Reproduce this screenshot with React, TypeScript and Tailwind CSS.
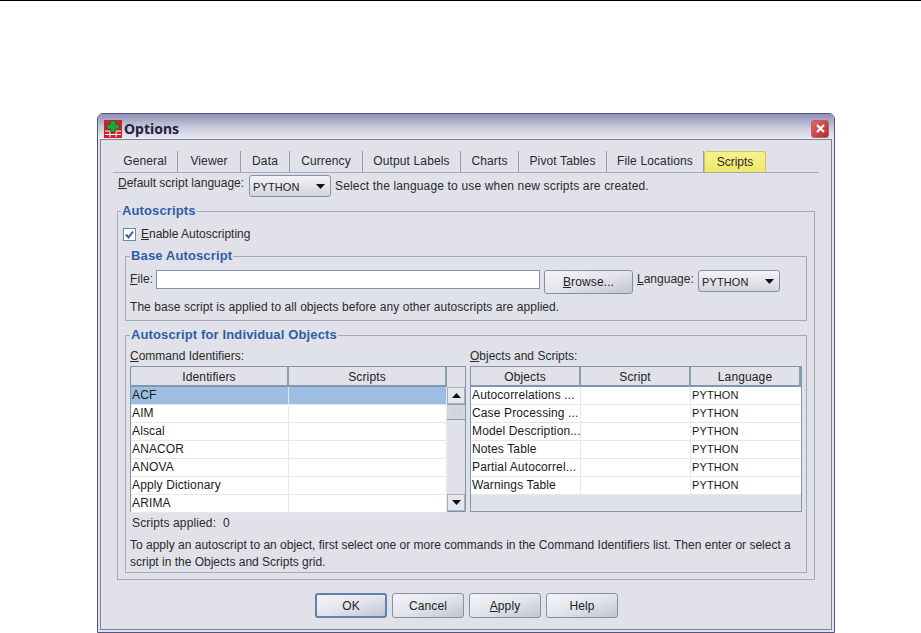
const tabs = [
  { label: "General", w: "w-[65px]" },
  { label: "Viewer", w: "w-[63px]" },
  { label: "Data", w: "w-[49px]" },
  { label: "Currency", w: "w-[73px]" },
  { label: "Output Labels", w: "w-[98px]" },
  { label: "Charts", w: "w-[58px]" },
  { label: "Pivot Tables", w: "w-[88px]" },
  { label: "File Locations", w: "w-[97px]" },
];

const identifiers = ["ACF", "AIM", "Alscal", "ANACOR", "ANOVA", "Apply Dictionary", "ARIMA"];
const objects = [
  "Autocorrelations ...",
  "Case Processing ...",
  "Model Description...",
  "Notes Table",
  "Partial Autocorrel...",
  "Warnings Table",
];

function Arrow({ up }: { up?: boolean }) {
  return (
    <svg width="9" height="5" viewBox="0 0 9 5" className="shrink-0">
      <path d={up ? "M4.5 0L9 5H0Z" : "M0 0H9L4.5 5Z"} fill="#111" />
    </svg>
  );
}

function Select({ className }: { className?: string }) {
  return (
    <div
      className={`flex w-[82px] items-center justify-between rounded-[3px] border border-[#8193ad] bg-gradient-to-b from-[#f3f3f8] to-[#d4d4de] pl-[3px] pr-[5px] text-[#222] ${className}`}
    >
      <span className="mt-px text-[11px]">PYTHON</span>
      <Arrow />
    </div>
  );
}

function Btn({ children, w, primary }: { children: React.ReactNode; w: string; primary?: boolean }) {
  return (
    <div
      className={`flex items-center justify-center rounded-[3px] border bg-gradient-to-br from-[#f4f4f8] via-[#e4e4ec] to-[#c4c4d0] text-[#222] ${w} ${
        primary ? "border-[#5b83ae] border-2" : "border-[#7f93a8]"
      }`}
    >
      {children}
    </div>
  );
}

function HeadCell({ label, className }: { label: string; className?: string }) {
  return (
    <div
      className={`flex h-5 items-center justify-center border-b-2 border-r-2 border-b-[#7f96ad] border-r-[#8c9db0] bg-[#e1e1ea] pt-px text-[#222] ${className}`}
    >
      {label}
    </div>
  );
}

function Cell({ children, selected, last }: { children?: React.ReactNode; selected?: boolean; last?: boolean }) {
  return (
    <div
      className={`flex h-[18px] items-center overflow-hidden whitespace-nowrap border-b border-r border-[#e6e6ee] pb-px pl-px text-[#1a1a1a] ${
        selected ? "bg-[#9dbde3]" : "bg-white"
      } ${last ? "border-r-0 text-[11px]" : ""}`}
    >
      {children}
    </div>
  );
}

function GroupTitle({ children, className }: { children: React.ReactNode; className?: string }) {
  return <legend className={`px-px text-[13px] font-bold leading-[14px] text-[#2f5da5] ${className}`}>{children}</legend>;
}

export default function App() {
  return (
    <div className="h-[633px] w-[921px] overflow-hidden bg-white font-['Liberation_Sans',Arial,sans-serif] text-[12px] leading-[14px] tracking-[0.13px] text-[#2a2a2a]">
      <div className="h-px w-full bg-black" />
      <div className="ml-[97px] mt-[112px] flex h-[520px] w-[738px] flex-col rounded-t-[6px] border border-[#54547e] bg-[#e1e1ea]">
        {/* title bar */}
        <div className="flex h-[25px] shrink-0 items-center rounded-t-[5px] bg-gradient-to-b from-[#8f8fb4] via-[#c6c6da] to-[#ebebf3] pl-[6px] pr-[5px] pt-[4px]">
          <svg width="18" height="18" viewBox="0 0 18 18" className="shrink-0">
            <rect width="18" height="18" fill="#c8232c" />
            <path d="M1 11H17M1 14.5H17M6 11V17M12 11V17" stroke="#fff" strokeWidth="1" />
            <path d="M6.5 1H11.5V4.5H15V9H11.5V12H6.5V9H3V4.5H6.5Z" fill="#1ea83c" stroke="#0c5a1e" strokeWidth="0.6" />
          </svg>
          <span className="ml-[2px] font-['Noto_Sans',sans-serif] text-[14px] font-bold tracking-normal text-[#23233c]">Options</span>
          <div className="ml-auto flex h-[18px] w-[18px] items-center justify-center rounded-[3px] border border-[#a8686c] bg-gradient-to-br from-[#e2676a] to-[#b3262f]">
            <svg width="9" height="9" viewBox="0 0 9 9">
              <path d="M1 1L8 8M8 1L1 8" stroke="#fff" strokeWidth="2.2" />
            </svg>
          </div>
        </div>

        {/* body */}
        <div className="mx-[2px] mb-[2px] flex min-h-0 flex-1 flex-col border border-[#80809f] pl-[12px] pr-[12px] pt-[11px]">
          {/* tabs */}
          <div className="flex h-[22px] shrink-0 border-b border-[#a9a9b5]">
            {tabs.map((t) => (
              <div key={t.label} className={`flex items-center justify-center border-r border-[#9b9ba8] pb-px ${t.w}`}>
                {t.label}
              </div>
            ))}
            <div className="flex w-[62px] items-center justify-center rounded-t-[3px] border border-b-0 border-[#c8c86a] bg-gradient-to-b from-[#f6f28e] to-[#efe86c] pb-px tracking-normal">
              Scripts
            </div>
          </div>

          {/* default language */}
          <div className="mt-[2px] flex h-[22px] shrink-0 items-center pl-[5px]">
            <span className="-mt-[6px] w-[131px] tracking-normal">
              <u>D</u>efault script language:
            </span>
            <Select className="h-[22px]" />
            <span className="ml-1 pb-px tracking-[0.16px]">Select the language to use when new scripts are created.</span>
          </div>

          {/* autoscripts */}
          <fieldset className="ml-[4px] mr-[4px] mt-[7px] h-[376px] shrink-0 border border-[#a9a9b5] pl-[7px] pr-[7px]">
            <GroupTitle className="-ml-[4px]">Autoscripts</GroupTitle>
            <div className="mt-[9px] flex h-[14px] items-center">
              <div className="-ml-[2px] flex h-[13px] w-[13px] items-center justify-center border border-[#6f86a8] bg-white">
                <svg width="11" height="11" viewBox="0 0 11 11">
                  <path d="M2 5.5L4.5 8.5L9 2.5" fill="none" stroke="#2a5fb0" strokeWidth="2" />
                </svg>
              </div>
              <span className="ml-[5px] tracking-normal">
                <u>E</u>nable Autoscripting
              </span>
            </div>

            {/* base autoscript */}
            <fieldset className="mt-[8px] h-[72px] border border-[#a9a9b5] pl-[4px] pr-[4px]">
              <GroupTitle>Base Autoscript</GroupTitle>
              <div className="mt-[7px] flex h-[23px] items-start">
                <span className="w-[26px] pt-[2px]">
                  <u>F</u>ile:
                </span>
                <div className="h-[19px] w-[384px] border border-[#8193ad] bg-white" />
                <Btn w="ml-[4px] h-[24px] w-[89px]">
                  <span>
                    <u>B</u>rowse...
                  </span>
                </Btn>
                <span className="ml-[4px] w-[61px] pt-[2px] tracking-normal">
                  <u>L</u>anguage:
                </span>
                <Select className="h-[22px]" />
              </div>
              <div className="mt-[7px] tracking-[0.06px]">The base script is applied to all objects before any other autoscripts are applied.</div>
            </fieldset>

            {/* individual objects */}
            <fieldset className="mt-[7px] h-[245px] border border-[#a9a9b5] pl-[4px] pr-[4px]">
              <GroupTitle>Autoscript for Individual Objects</GroupTitle>
              <div className="mt-[7px] flex gap-[4px]">
                <div className="w-[336px]">
                  <div className="h-[17px] tracking-normal">
                    <u>C</u>ommand Identifiers:
                  </div>
                  <div className="flex h-[146px] border border-[#7f96ad] bg-[#e1e1ea]">
                    <div className="grid w-[316px] grid-cols-[158px_158px] content-start">
                      <HeadCell label="Identifiers" />
                      <HeadCell label="Scripts" />
                      {identifiers.map((id, i) => (
                        <div key={id} className="contents">
                          <Cell selected={i === 0}>{id}</Cell>
                          <Cell selected={i === 0} />
                        </div>
                      ))}
                    </div>
                    {/* scrollbar */}
                    <div className="flex w-[18px] flex-col">
                      <div className="h-5" />
                      <div className="flex h-[17px] items-center justify-center border border-[#a9b3c0] bg-[#e6e6ee]">
                        <Arrow up />
                      </div>
                      <div className="flex h-[16px] items-center justify-center border-y border-[#8c9db0] bg-[#d3d9e0]">
                        <svg width="12" height="10" viewBox="0 0 12 10">
                          <path d="M1 1h1M5 1h1M9 1h1M3 3h1M7 3h1M11 3h1M1 5h1M5 5h1M9 5h1M3 7h1M7 7h1M11 7h1M5 9h1" stroke="#b0bac6" strokeWidth="1" />
                        </svg>
                      </div>
                      <div className="flex-1 bg-[#e1e1ea]" />
                      <div className="flex h-[17px] items-center justify-center border border-[#a9b3c0] bg-[#e6e6ee]">
                        <Arrow />
                      </div>
                    </div>
                  </div>
                </div>

                <div className="w-[332px]">
                  <div className="h-[17px] tracking-normal">
                    <u>O</u>bjects and Scripts:
                  </div>
                  <div className="h-[146px] border border-[#7f96ad] bg-[#e1e1ea]">
                    <div className="grid grid-cols-[110px_110px_110px] content-start">
                      <HeadCell label="Objects" />
                      <HeadCell label="Script" />
                      <HeadCell label="Language" />
                      {objects.map((o) => (
                        <div key={o} className="contents">
                          <Cell>{o}</Cell>
                          <Cell />
                          <Cell last>PYTHON</Cell>
                        </div>
                      ))}
                    </div>
                  </div>
                </div>
              </div>
              <div className="mt-[4px] pl-[2px]">Scripts applied:&nbsp; 0</div>
              <p className="mt-[7px] w-[672px] leading-[17px] tracking-normal">
                To apply an autoscript to an object, first select one or more commands in the Command Identifiers list. Then enter or select a script in the Objects and Scripts grid.
              </p>
            </fieldset>
          </fieldset>

          {/* buttons */}
          <div className="mt-[13px] flex h-[25px] shrink-0 gap-[5px] pl-[202px]">
            <Btn w="w-[72px]" primary>
              OK
            </Btn>
            <Btn w="w-[72px]">Cancel</Btn>
            <Btn w="w-[72px]">
              <span>
                <u>A</u>pply
              </span>
            </Btn>
            <Btn w="w-[72px]">Help</Btn>
          </div>
        </div>
      </div>
    </div>
  );
}
